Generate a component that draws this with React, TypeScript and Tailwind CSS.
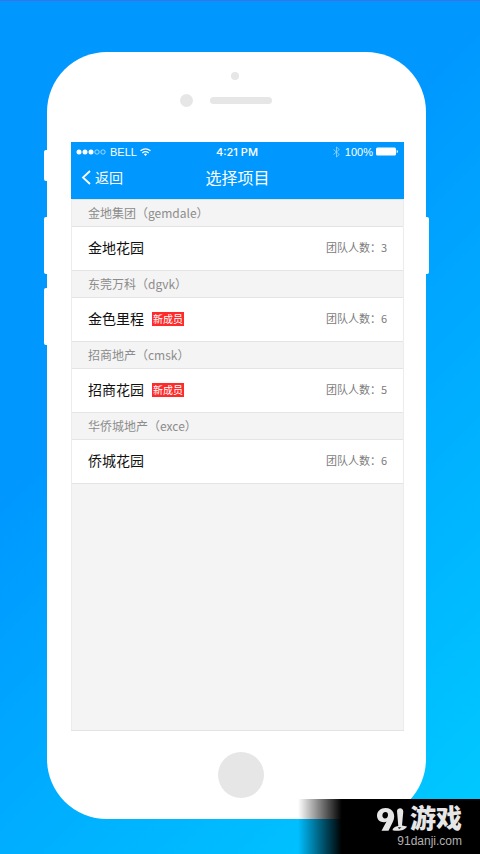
import React from "react";

type Project = { group: string; name: string; members: number; isNew?: boolean };

const projects: Project[] = [
  { group: "金地集团（gemdale）", name: "金地花园", members: 3 },
  { group: "东莞万科（dgvk）", name: "金色里程", members: 6, isNew: true },
  { group: "招商地产（cmsk）", name: "招商花园", members: 5, isNew: true },
  { group: "华侨城地产（exce）", name: "侨城花园", members: 6 },
];

function StatusBar() {
  return (
    <div className="grid h-[19px] grid-cols-[1fr_auto_1fr] items-center pl-[5px] pr-[6px] font-['Inter','Liberation_Sans',sans-serif] text-[11px] leading-4">
      <div className="flex items-center gap-[3px]">
        <svg className="mr-px h-[6px] w-[30px]" viewBox="0 0 30 6" fill="currentColor" aria-hidden="true">
          <circle cx="3" cy="3" r="2.5" />
          <circle cx="9" cy="3" r="2.5" />
          <circle cx="15" cy="3" r="2.5" />
          <g fill="none" stroke="currentColor" strokeWidth="0.6">
            <circle cx="21" cy="3" r="2.2" />
            <circle cx="27" cy="3" r="2.2" />
          </g>
        </svg>
        <span className="font-['Liberation_Sans',sans-serif]">BELL</span>
        <svg className="h-2 w-[11px]" viewBox="0 0 11 8" fill="none" stroke="currentColor" strokeWidth="1.3" aria-hidden="true">
          <path d="M.5 2.800Q5.500-1 10.500 2.800M2.300 4.900Q5.500 2.400 8.700 4.900" />
          <path d="M3.900 6.200Q5.500 5 7.100 6.200L5.500 8Z" fill="currentColor" stroke="none" />
        </svg>
      </div>
      <span className="font-medium">4:21 PM</span>
      <div className="flex items-center justify-end gap-[3px]">
        <svg className="mr-[2px] h-3 w-[7px] opacity-60" viewBox="0 0 7 12" fill="none" stroke="currentColor" strokeWidth="0.8" aria-hidden="true">
          <path d="M.5 3.500 6.300 8.500 3.500 11V1L6.300 3.500.5 8.500" />
        </svg>
        <span className="font-['Liberation_Sans',sans-serif]">100%</span>
        <svg className="h-[9px] w-[22px]" viewBox="0 0 22 9" fill="currentColor" aria-hidden="true">
          <rect x="0" y="0.500" width="20" height="8" rx="1.500" />
          <path d="M20.700 3Q22 3.300 22 4.500T20.700 6Z" />
        </svg>
      </div>
    </div>
  );
}

function Header() {
  return (
    <header className="bg-[#0098ff] text-white">
      <StatusBar />
      <div className="grid h-[38px] grid-cols-[1fr_auto_1fr] items-center pb-[6px]">
        <button type="button" className="flex items-center gap-1 justify-self-start pl-[10px] text-sm">
          <svg className="h-[15px] w-[10px]" viewBox="0 0 10 15" fill="none" stroke="currentColor" strokeWidth="1.800" aria-hidden="true">
            <path d="M9 1 2 7.500 9 14" />
          </svg>
          返回
        </button>
        <h1 className="text-base">选择项目</h1>
      </div>
    </header>
  );
}

function ProjectGroup({ group, name, members, isNew }: Project) {
  return (
    <section>
      <h2 className="flex h-7 items-center border-y border-[#e4e4e4] bg-[#f4f4f4] px-4 text-xs text-[#8c8c8c]">{group}</h2>
      <div className="flex h-[43px] items-center bg-white px-4 pb-[2px]">
        <span className="pb-[2px] text-sm text-[#111111]">{name}</span>
        {isNew && <span className="ml-2 flex h-[14px] w-8 items-center justify-center bg-[#ff2a2a] text-[10px] text-white">新成员</span>}
        <span className="ml-auto text-[11px] text-[#7c7c7c]">团队人数：{members}</span>
      </div>
    </section>
  );
}

function Watermark() {
  return (
    <footer className="absolute right-0 bottom-0 flex h-[55px] w-[182px] flex-col items-end bg-linear-to-r from-transparent from-0% to-black to-[24%] pt-[5px] pr-[18px] text-[#e6e6e6]">
      <div className="flex h-[25px] items-center gap-[3px]">
        <svg className="mt-[5px] h-[23px] w-[30px]" viewBox="0 0 30 23" fill="currentColor" aria-hidden="true">
          <path fillRule="evenodd" d="M8.500 0C3.600 0 0 3.200 0 7.500 0 11.700 3 14.300 7.200 14.200 8 14.200 9 14 9.500 13.600L4.500 22.800H11.500L16 13.500C19 7.600 16.500 0 8.500 0ZM8.500 4C6.500 4 5.400 5.600 5.400 7.500 5.400 9.300 6.400 10.400 8 10.400 9.900 10.400 11 8.900 11 7 11 5.200 10.100 4 8.500 4Z" />
          <path d="M20 3C20.300-.5 26-1 26.300 3.500L25 17.500 30 18.500C28.500 22 22 23.800 15.500 22.300 15.500 20 18 18.600 21.300 18Z" />
          <path d="M21 19.200 24.500 19.400 22 21Z" fill="black" />
        </svg>
        <span className="text-[26px] leading-[25px] font-black">游戏</span>
      </div>
      <a href="#top" className="mt-1 font-['Liberation_Sans',sans-serif] text-xs leading-4 text-[#b0b0b0]">91danji.com</a>
    </footer>
  );
}

export default function App() {
  return (
    <div id="top" className="relative min-h-screen border-t border-[#4070e8] bg-linear-135 from-[#0098ff] from-38% to-[#00c8ff] to-96% pt-[51px] pr-[54px] pb-[35px] pl-[47px] font-['Noto_Sans_CJK_SC',sans-serif]">
      <div className="relative rounded-[60px] bg-white pt-5 pr-[22px] pb-[21px] pl-6">
        <div className="absolute top-[98px] -left-[3px] h-[31px] w-1 rounded-l-xs bg-white" />
        <div className="absolute top-[165px] -left-[3px] h-[57px] w-1 rounded-l-xs bg-white" />
        <div className="absolute top-[236px] -left-[3px] h-[57px] w-1 rounded-l-xs bg-white" />
        <div className="absolute top-[165px] -right-[3px] h-[57px] w-1 rounded-r-xs bg-white" />
        <div className="flex h-[70px] flex-col items-center pr-[6px]">
          <div className="size-2 rounded-full bg-[#e6e6e6]" />
          <div className="mt-[14px] flex items-center gap-[17px] pr-[18px]">
            <div className="size-[13px] rounded-full bg-[#e6e6e6]" />
            <div className="h-[7px] w-[62px] rounded-full bg-[#e6e6e6]" />
          </div>
        </div>
        <main className="flex min-h-[589px] flex-col border-b border-[#e4e4e4] bg-[#f4f4f4]">
          <Header />
          <div className="grow border-x border-[#ececec]">
            {projects.map((project) => (
              <ProjectGroup key={project.name} {...project} />
            ))}
            <div className="border-t border-[#e4e4e4]" />
          </div>
        </main>
        <div className="flex justify-center pt-[21px] pl-[6px]">
          <button type="button" aria-label="Home" className="size-[46px] rounded-full bg-[#e6e6e6]" />
        </div>
      </div>
      <Watermark />
    </div>
  );
}
